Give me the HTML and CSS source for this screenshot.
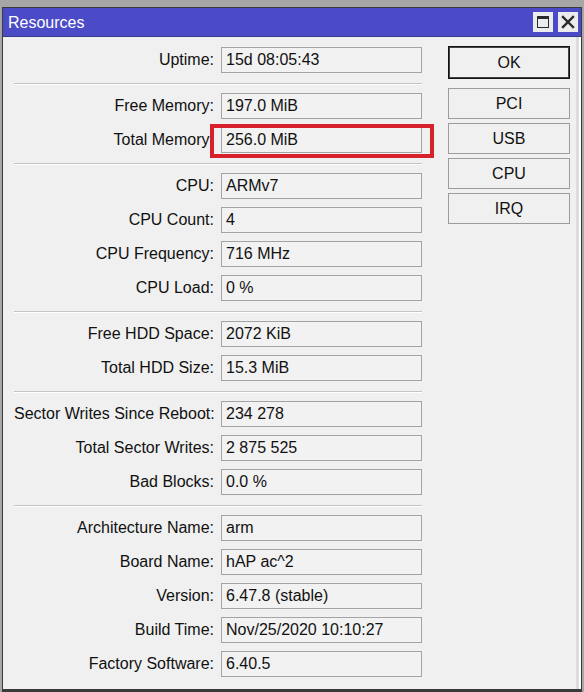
FILE: index.html
```html
<!DOCTYPE html>
<html>
<head>
<meta charset="utf-8">
<link rel="stylesheet" href="styles.css">
</head>
<body>
<div class="window">
  <div class="titlebar">
    <span class="title">Resources</span>
    <div class="tbtns">
      <div class="tbtn"><svg width="14" height="14" viewBox="0 0 14 14"><rect x="1.5" y="1.5" width="11" height="11" fill="none" stroke="#2a2a2a" stroke-width="1"/><rect x="1" y="1" width="12" height="3" fill="#2a2a2a"/></svg></div>
      <div class="tbtn"><svg width="14" height="14" viewBox="0 0 14 14"><path d="M2 2 L12 12 M12 2 L2 12" stroke="#2a2a2a" stroke-width="2.4" stroke-linecap="square"/></svg></div>
    </div>
  </div>
  <div class="content">
    <div class="fields">
      <div class="group">
        <div class="row"><span class="label">Uptime:</span><span class="field">15d 08:05:43</span></div>
      </div>
      <div class="sep"></div>
      <div class="group">
        <div class="row"><span class="label">Free Memory:</span><span class="field">197.0 MiB</span></div>
        <div class="row"><span class="label">Total Memory:</span><span class="field">256.0 MiB<span class="highlight"></span></span></div>
      </div>
      <div class="sep"></div>
      <div class="group">
        <div class="row"><span class="label">CPU:</span><span class="field">ARMv7</span></div>
        <div class="row"><span class="label">CPU Count:</span><span class="field">4</span></div>
        <div class="row"><span class="label">CPU Frequency:</span><span class="field">716 MHz</span></div>
        <div class="row"><span class="label">CPU Load:</span><span class="field">0 %</span></div>
      </div>
      <div class="sep"></div>
      <div class="group">
        <div class="row"><span class="label">Free HDD Space:</span><span class="field">2072 KiB</span></div>
        <div class="row"><span class="label">Total HDD Size:</span><span class="field">15.3 MiB</span></div>
      </div>
      <div class="sep"></div>
      <div class="group">
        <div class="row"><span class="label">Sector Writes Since Reboot:</span><span class="field">234 278</span></div>
        <div class="row"><span class="label">Total Sector Writes:</span><span class="field">2 875 525</span></div>
        <div class="row"><span class="label">Bad Blocks:</span><span class="field">0.0 %</span></div>
      </div>
      <div class="sep"></div>
      <div class="group">
        <div class="row"><span class="label">Architecture Name:</span><span class="field">arm</span></div>
        <div class="row"><span class="label">Board Name:</span><span class="field">hAP ac^2</span></div>
        <div class="row"><span class="label">Version:</span><span class="field">6.47.8 (stable)</span></div>
        <div class="row"><span class="label">Build Time:</span><span class="field">Nov/25/2020 10:10:27</span></div>
        <div class="row"><span class="label">Factory Software:</span><span class="field">6.40.5</span></div>
      </div>
    </div>
    <div class="buttons">
      <div class="btn btn-default">OK</div>
      <div class="btn-list">
        <div class="btn">PCI</div>
        <div class="btn">USB</div>
        <div class="btn">CPU</div>
        <div class="btn">IRQ</div>
      </div>
    </div>
  </div>
</div>
</body>
</html>
```

FILE: styles.css
```css
html, body {
  margin: 0;
  padding: 0;
}
body {
  background: #a6a6a6;
  width: 584px;
  height: 692px;
  overflow: hidden;
  font-family: "Liberation Sans", Arial, sans-serif;
  font-size: 16px;
  color: #111;
}
.window {
  margin: 7px 2px 0 2px;
  height: 685px;
  box-sizing: border-box;
  border: 1px solid #3a3a3a;
  border-bottom-width: 3px;
  background: #f0f0f0;
  display: flex;
  flex-direction: column;
}
.titlebar {
  height: 28px;
  background: #4b4bc8;
  display: flex;
  align-items: center;
  justify-content: space-between;
  padding: 0 3px 0 5px;
  border-bottom: 1px solid #3a3a8a;
}
.title {
  color: #fff;
  font-size: 16px;
  padding-top: 2px;
}
.tbtns {
  display: flex;
  gap: 5px;
}
.tbtn {
  width: 20px;
  height: 20px;
  background: #ececec;
  display: flex;
  align-items: center;
  justify-content: center;
}
.content {
  flex: 1;
  display: flex;
  padding: 9px 9px 0 11px;
  border-right: 2px solid #ffffff;
  box-shadow: inset -3px 0 0 #dcdcdc;
}
.fields {
  width: 408px;
  margin-top: 1px;
  display: flex;
  flex-direction: column;
}
.group {
  display: flex;
  flex-direction: column;
  gap: 8px;
}
.sep {
  height: 1px;
  background: #c4c4c4;
  margin: 10px 0 9px 0;
  box-shadow: 0 1px 0 #ffffff;
}
.row {
  display: flex;
  align-items: center;
  gap: 7px;
  height: 26px;
}
.label {
  width: 200px;
  text-align: right;
  white-space: nowrap;
}
.field {
  position: relative;
  width: 201px;
  height: 26px;
  box-sizing: border-box;
  border: 1px solid #a4a4a4;
  background: #f2f2f2;
  padding-left: 4px;
  line-height: 24px;
  white-space: nowrap;
}
.highlight {
  position: absolute;
  left: -12px;
  top: -4px;
  width: 224px;
  height: 34px;
  box-sizing: border-box;
  border: 4px solid #d7222c;
}
.buttons {
  margin-left: 26px;
  width: 123px;
  display: flex;
  flex-direction: column;
  gap: 9px;
}
.btn-list {
  display: flex;
  flex-direction: column;
  gap: 4px;
}
.btn {
  height: 31px;
  box-sizing: border-box;
  border: 1px solid #9c9c9c;
  background: #f0f0f0;
  display: flex;
  align-items: center;
  justify-content: center;
}
.btn-default {
  height: 33px;
  border: 1px solid #111;
  box-shadow: inset 0 0 0 1px #444;
}
```
